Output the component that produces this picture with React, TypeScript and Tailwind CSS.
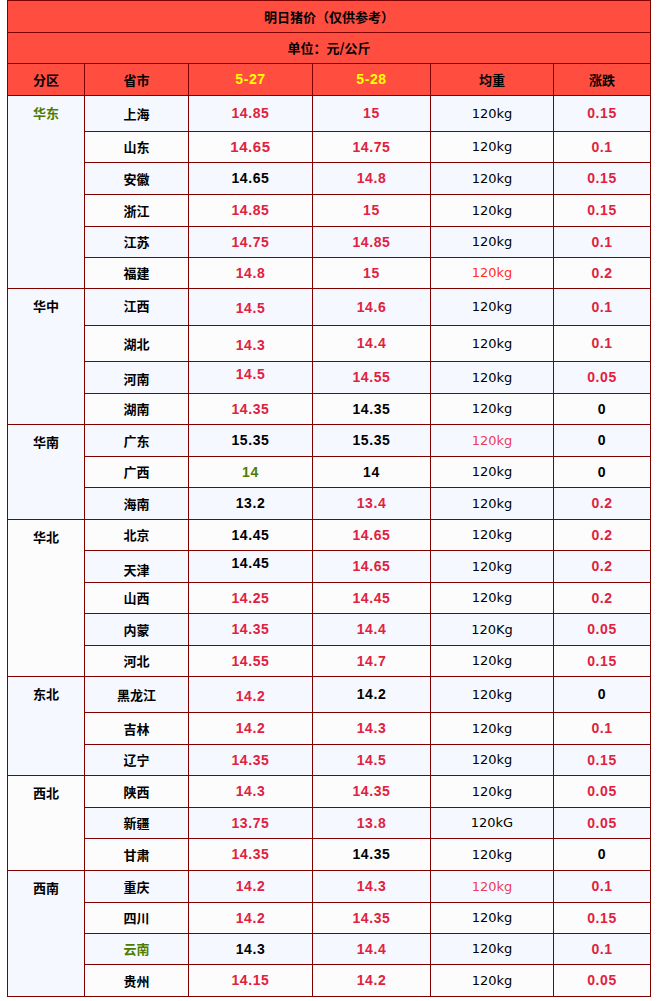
import React from "react";

type Tone = "r" | "k" | "g" | "o" | "p";

const toneClass: Record<Tone, string> = {
  r: "text-[#e0223f]",
  k: "text-black",
  g: "text-[#4e7c00]",
  o: "text-[#ff3026]",
  p: "text-[#e8405c]",
};

type Row = {
  name: string;
  nameTone?: Tone;
  nameFix?: string;
  h: number;
  p27: string;
  t27: Tone;
  fix27?: string;
  p28: string;
  t28: Tone;
  w?: string;
  wTone?: Tone;
  chg: string;
  tChg: Tone;
  big?: boolean;
};

type Group = { area: string; areaTone?: Tone; rows: Row[] };

const groups: Group[] = [
  {
    area: "华东",
    areaTone: "g",
    rows: [
      { name: "上海", h: 36, p27: "14.85", t27: "r", p28: "15", t28: "r", chg: "0.15", tChg: "r" },
      { name: "山东", h: 31, p27: "14.65", t27: "r", p28: "14.75", t28: "r", chg: "0.1", tChg: "r", big: true },
      { name: "安徽", h: 32, p27: "14.65", t27: "k", p28: "14.8", t28: "r", chg: "0.15", tChg: "r" },
      { name: "浙江", h: 32, p27: "14.85", t27: "r", p28: "15", t28: "r", chg: "0.15", tChg: "r" },
      { name: "江苏", h: 31, p27: "14.75", t27: "r", p28: "14.85", t28: "r", chg: "0.1", tChg: "r" },
      { name: "福建", h: 31, p27: "14.8", t27: "r", p28: "15", t28: "r", wTone: "o", chg: "0.2", tChg: "r" },
    ],
  },
  {
    area: "华中",
    rows: [
      { name: "江西", nameFix: "pb-[3px]", h: 37, p27: "14.5", t27: "r", fix27: "pt-[3px]", p28: "14.6", t28: "r", chg: "0.1", tChg: "r" },
      { name: "湖北", h: 36, p27: "14.3", t27: "r", fix27: "pt-[3px]", p28: "14.4", t28: "r", chg: "0.1", tChg: "r" },
      { name: "河南", nameFix: "pt-[3px]", h: 32, p27: "14.5", t27: "r", fix27: "pb-[6px]", p28: "14.55", t28: "r", chg: "0.05", tChg: "r" },
      { name: "湖南", h: 31, p27: "14.35", t27: "r", p28: "14.35", t28: "k", chg: "0", tChg: "k" },
    ],
  },
  {
    area: "华南",
    rows: [
      { name: "广东", h: 32, p27: "15.35", t27: "k", p28: "15.35", t28: "k", wTone: "p", chg: "0", tChg: "k" },
      { name: "广西", h: 31, p27: "14", t27: "g", p28: "14", t28: "k", chg: "0", tChg: "k" },
      { name: "海南", h: 32, p27: "13.2", t27: "k", p28: "13.4", t28: "r", chg: "0.2", tChg: "r" },
    ],
  },
  {
    area: "华北",
    rows: [
      { name: "北京", h: 31, p27: "14.45", t27: "k", p28: "14.65", t28: "r", chg: "0.2", tChg: "r" },
      { name: "天津", nameFix: "pt-[7px]", h: 32, p27: "14.45", t27: "k", fix27: "pb-[6px]", p28: "14.65", t28: "r", chg: "0.2", tChg: "r" },
      { name: "山西", h: 31, p27: "14.25", t27: "r", p28: "14.45", t28: "r", chg: "0.2", tChg: "r" },
      { name: "内蒙", h: 32, p27: "14.35", t27: "r", p28: "14.4", t28: "r", w: "120Kg", chg: "0.05", tChg: "r" },
      { name: "河北", h: 31, p27: "14.55", t27: "r", p28: "14.7", t28: "r", chg: "0.15", tChg: "r" },
    ],
  },
  {
    area: "东北",
    rows: [
      { name: "黑龙江", h: 36, p27: "14.2", t27: "r", fix27: "pt-[3px]", p28: "14.2", t28: "k", chg: "0", tChg: "k" },
      { name: "吉林", h: 32, p27: "14.2", t27: "r", p28: "14.3", t28: "r", chg: "0.1", tChg: "r" },
      { name: "辽宁", h: 31, p27: "14.35", t27: "r", p28: "14.5", t28: "r", chg: "0.15", tChg: "r" },
    ],
  },
  {
    area: "西北",
    rows: [
      { name: "陕西", h: 32, p27: "14.3", t27: "r", p28: "14.35", t28: "r", chg: "0.05", tChg: "r" },
      { name: "新疆", h: 31, p27: "13.75", t27: "r", p28: "13.8", t28: "r", w: "120kG", chg: "0.05", tChg: "r" },
      { name: "甘肃", h: 32, p27: "14.35", t27: "r", p28: "14.35", t28: "k", chg: "0", tChg: "k" },
    ],
  },
  {
    area: "西南",
    rows: [
      { name: "重庆", h: 32, p27: "14.2", t27: "r", p28: "14.3", t28: "r", wTone: "p", chg: "0.1", tChg: "r" },
      { name: "四川", h: 31, p27: "14.2", t27: "r", p28: "14.35", t28: "r", chg: "0.15", tChg: "r" },
      { name: "云南", nameTone: "g", h: 31, p27: "14.3", t27: "k", p28: "14.4", t28: "r", chg: "0.1", tChg: "r" },
      { name: "贵州", h: 32, p27: "14.15", t27: "r", p28: "14.2", t28: "r", chg: "0.05", tChg: "r" },
    ],
  },
];

// label cells of the area column alternate like the rows do
const areaBg = ["bg-[#f5f9ff]", "bg-[#f5f9ff]", "bg-[#f5f9ff]", "bg-[#fcfcfd]", "bg-[#f5f9ff]", "bg-[#fcfcfd]", "bg-[#f5f9ff]"];

const cjk = "font-['Noto_Sans_CJK_SC',sans-serif]";
const num = "font-['Liberation_Sans','Noto_Sans_CJK_SC',sans-serif] font-bold text-[14px] tracking-[0.6px]";
const cell = "border border-[#800000] text-center align-middle p-0";

export default function App() {
  let idx = 0;
  return (
    <div className="w-[657px] h-[1001px] bg-white">
      <table className="ml-[7px] w-[643px] table-fixed border-collapse">
        <colgroup>
          <col className="w-[77px]" />
          <col className="w-[104px]" />
          <col className="w-[124px]" />
          <col className="w-[118px]" />
          <col className="w-[123px]" />
          <col className="w-[97px]" />
        </colgroup>
        <tbody>
          <tr className="h-[32px] bg-[#ff4d40]">
            <td colSpan={6} className={`${cell} ${cjk} text-[13px] font-bold text-black`}>
              明日猪价（仅供参考）
            </td>
          </tr>
          <tr className="h-[31px] bg-[#ff4d40]">
            <td colSpan={6} className={`${cell} ${cjk} text-[13px] font-bold text-black`}>
              单位：元/公斤
            </td>
          </tr>
          <tr className="h-[32px] bg-[#ff4d40]">
            <td className={`${cell} ${cjk} text-[13px] font-bold`}>分区</td>
            <td className={`${cell} ${cjk} text-[13px] font-bold`}>省市</td>
            <td className={`${cell} ${num} text-[#ffff00]`}>5-27</td>
            <td className={`${cell} ${num} text-[#ffff00]`}>5-28</td>
            <td className={`${cell} ${cjk} text-[13px] font-bold`}>均重</td>
            <td className={`${cell} ${cjk} text-[13px] font-bold`}>涨跌</td>
          </tr>
          {groups.map((g, gi) =>
            g.rows.map((r, ri) => {
              const bg = idx++ % 2 === 0 ? "bg-[#f5f9ff]" : "bg-[#fcfcfd]";
              return (
                <tr key={r.name} className={bg} style={{ height: r.h }}>
                  {ri === 0 && (
                    <td
                      rowSpan={g.rows.length}
                      className={`border border-[#800000] text-center align-top pt-[7px] leading-[20px] ${areaBg[gi]} ${cjk} text-[13px] font-bold ${toneClass[g.areaTone ?? "k"]}`}
                    >
                      {g.area}
                    </td>
                  )}
                  <td className={`${cell} ${cjk} text-[13px] font-bold ${r.nameFix ?? ""} ${toneClass[r.nameTone ?? "k"]}`}>
                    {r.name}
                  </td>
                  <td className={`${cell} ${num} ${r.big ? "text-[15px]" : ""} ${r.fix27 ?? ""} ${toneClass[r.t27]}`}>
                    {r.p27}
                  </td>
                  <td className={`${cell} ${num} ${toneClass[r.t28]}`}>{r.p28}</td>
                  <td className={`${cell} font-['DejaVu_Sans',sans-serif] text-[13px] ${toneClass[r.wTone ?? "k"]}`}>
                    {r.w ?? "120kg"}
                  </td>
                  <td className={`${cell} ${num} ${toneClass[r.tChg]}`}>{r.chg}</td>
                </tr>
              );
            })
          )}
        </tbody>
      </table>
    </div>
  );
}
